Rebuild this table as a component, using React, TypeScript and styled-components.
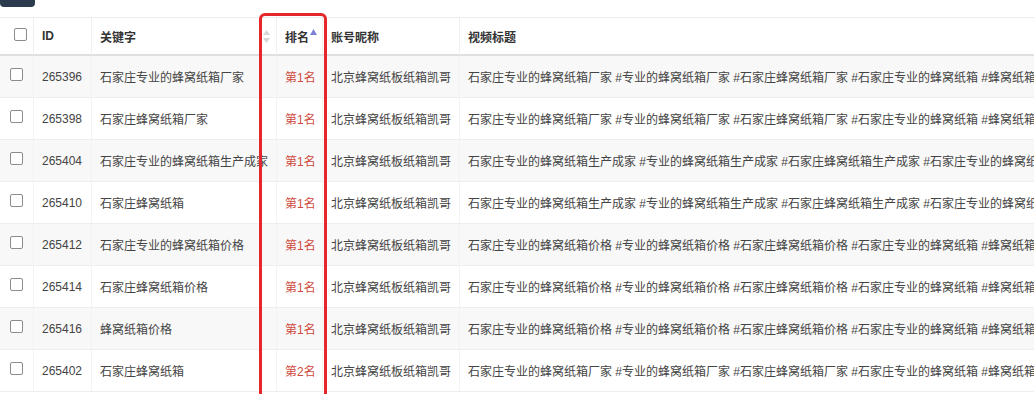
import React from "react";
import styled, { createGlobalStyle } from "styled-components";

const GlobalStyle = createGlobalStyle`
  html, body {
    margin: 0;
    padding: 0;
    background: #fff;
    overflow: hidden;
  }
  body {
    font-family: "Liberation Sans", "Noto Sans CJK SC", sans-serif;
    font-size: 12px;
    color: #444;
  }
`;

interface Row {
  id: number;
  keyword: string;
  rank: number;
  account: string;
  title: string;
}

const titleA =
  "石家庄专业的蜂窝纸箱厂家 #专业的蜂窝纸箱厂家 #石家庄蜂窝纸箱厂家 #石家庄专业的蜂窝纸箱 #蜂窝纸箱厂家 #石家庄纸箱";
const titleB =
  "石家庄专业的蜂窝纸箱生产成家 #专业的蜂窝纸箱生产成家 #石家庄蜂窝纸箱生产成家 #石家庄专业的蜂窝纸箱 #蜂窝纸箱";
const titleC =
  "石家庄专业的蜂窝纸箱价格 #专业的蜂窝纸箱价格 #石家庄蜂窝纸箱价格 #石家庄专业的蜂窝纸箱 #蜂窝纸箱价格 #石家庄纸箱";

const account = "北京蜂窝纸板纸箱凯哥";

const rows: Row[] = [
  { id: 265396, keyword: "石家庄专业的蜂窝纸箱厂家", rank: 1, account, title: titleA },
  { id: 265398, keyword: "石家庄蜂窝纸箱厂家", rank: 1, account, title: titleA },
  { id: 265404, keyword: "石家庄专业的蜂窝纸箱生产成家", rank: 1, account, title: titleB },
  { id: 265410, keyword: "石家庄蜂窝纸箱", rank: 1, account, title: titleB },
  { id: 265412, keyword: "石家庄专业的蜂窝纸箱价格", rank: 1, account, title: titleC },
  { id: 265414, keyword: "石家庄蜂窝纸箱价格", rank: 1, account, title: titleC },
  { id: 265416, keyword: "蜂窝纸箱价格", rank: 1, account, title: titleC },
  { id: 265402, keyword: "石家庄蜂窝纸箱", rank: 2, account, title: titleA },
];

const Page = styled.div`
  position: relative;
  width: 1034px;
  height: 394px;
  overflow: hidden;
`;

const Toolbar = styled.div`
  height: 7px;
  overflow: hidden;
  display: flex;
  align-items: flex-end;
  margin-bottom: 10px;
`;

const DarkButton = styled.button`
  width: 35px;
  height: 34px;
  flex: none;
  border: 0;
  border-radius: 4px;
  background: #2b3b4d;
  padding: 0;
`;

const Table = styled.table`
  border-collapse: separate;
  border-spacing: 0;
  table-layout: fixed;
  width: 1700px;
  border-top: 1px solid #ececec;
`;

const Th = styled.th<{ $pr?: number }>`
  height: 36px;
  padding: 0 ${(p) => p.$pr ?? 8}px 0 8px;
  text-align: left;
  font-weight: 700;
  color: #333;
  border-bottom: 2px solid #dfdfdf;
  border-right: 1px solid #f0f0f0;
  white-space: nowrap;
  vertical-align: middle;
`;

const HeadInner = styled.div`
  display: flex;
  align-items: center;
`;

const Td = styled.td<{ $center?: boolean }>`
  height: 41px;
  padding: 0 8px;
  border-bottom: 1px solid #eeeeee;
  border-right: 1px solid #f3f3f3;
  white-space: nowrap;
  overflow: visible;
  vertical-align: middle;
  text-align: ${(p) => (p.$center ? "center" : "left")};
`;

const BodyRow = styled.tr<{ $striped: boolean }>`
  background: ${(p) => (p.$striped ? "#f8f8f8" : "#fff")};
`;

const CheckCell = styled.span`
  display: flex;
  justify-content: center;
  align-items: center;
  padding-bottom: 4px;
`;

const Check = styled.span`
  display: block;
  width: 11px;
  height: 11px;
  border: 1px solid #8c8c8c;
  border-radius: 2px;
  background: #fff;
`;

const Rank = styled.span`
  color: #cf4a40;
`;

const SortBoth = styled.svg`
  margin-left: auto;
  flex: none;
`;

const SortAsc = styled.svg`
  flex: none;
  margin-left: 1px;
  margin-bottom: 8px;
`;

const Highlight = styled.div`
  position: absolute;
  left: 259px;
  top: 13px;
  width: 62px;
  height: 420px;
  border: 3px solid #e5262b;
  border-radius: 6px;
  pointer-events: none;
`;

function App() {
  return (
    <Page>
      <GlobalStyle />
      <Toolbar>
        <DarkButton />
      </Toolbar>
      <Table>
        <colgroup>
          <col style={{ width: 34 }} />
          <col style={{ width: 58 }} />
          <col style={{ width: 185 }} />
          <col style={{ width: 46 }} />
          <col style={{ width: 137 }} />
          <col />
        </colgroup>
        <thead>
          <tr>
            <Th $pr={0}>
              <CheckCell>
                <Check />
              </CheckCell>
            </Th>
            <Th>ID</Th>
            <Th $pr={6}>
              <HeadInner>
                关键字
                <SortBoth width="7" height="13" viewBox="0 0 7 13">
                  <path d="M3.5 0 L7 5 L0 5 Z" fill="#d6d6d6" />
                  <path d="M3.5 13 L7 8 L0 8 Z" fill="#d6d6d6" />
                </SortBoth>
              </HeadInner>
            </Th>
            <Th>
              <HeadInner>
                排名
                <SortAsc width="7" height="6" viewBox="0 0 7 6">
                  <path d="M3.5 0 L7 6 L0 6 Z" fill="#7c80d6" />
                </SortAsc>
              </HeadInner>
            </Th>
            <Th>账号昵称</Th>
            <Th>视频标题</Th>
          </tr>
        </thead>
        <tbody>
          {rows.map((row, index) => (
            <BodyRow key={row.id} $striped={index % 2 === 0}>
              <Td $center>
                <CheckCell>
                  <Check />
                </CheckCell>
              </Td>
              <Td>{row.id}</Td>
              <Td>{row.keyword}</Td>
              <Td>
                <Rank>第{row.rank}名</Rank>
              </Td>
              <Td>{row.account}</Td>
              <Td>{row.title}</Td>
            </BodyRow>
          ))}
        </tbody>
      </Table>
      <Highlight />
    </Page>
  );
}

export default App;
